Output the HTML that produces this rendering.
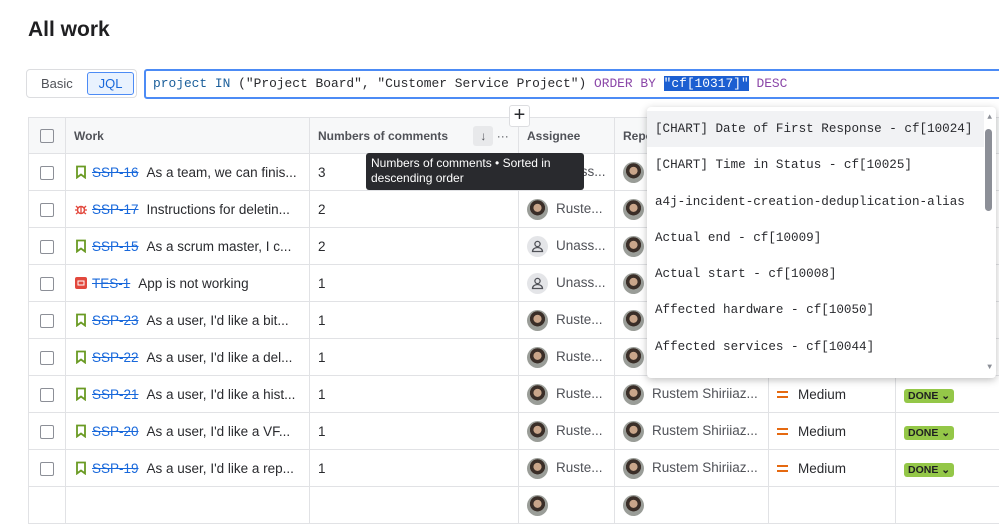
<!DOCTYPE html>
<html><head><style>
*{box-sizing:border-box;margin:0;padding:0}
body{width:999px;height:498px;overflow:hidden;background:#fff;font-family:"Liberation Sans",sans-serif;color:#292a2e;position:relative;font-size:14px}
h1{position:absolute;left:28px;top:18px;font-size:21px;font-weight:bold;color:#1f1f21}
.toggle{position:absolute;left:26px;top:69px;width:111px;height:29px;border:1px solid #dcdde0;border-radius:4px}
.toggle .b{position:absolute;left:14px;top:6px;font-size:13px;color:#505258}
.toggle .j{position:absolute;left:60px;top:2px;width:47px;height:23px;background:#e9f2fe;border:1px solid #4c8bf5;border-radius:3px;color:#1868db;font-size:13px;text-align:center;line-height:21px}
.jql{position:absolute;left:144px;top:69px;width:870px;height:30px;border:2px solid #4c8bf5;border-radius:3px;font-family:"Liberation Mono",monospace;font-size:12.9px;line-height:26px;padding-left:7px;white-space:pre;color:#292a2e}
.k{color:#1a5e9a}.o{color:#8b47a8}.sel{background:#1c5fd1;color:#fff}
table{position:absolute;left:28px;top:117px;border-collapse:collapse;table-layout:fixed;width:1000px}
td,th{border:1px solid #e1e2e5;height:37px;font-size:13.5px;white-space:nowrap;overflow:hidden;padding:0 8px;text-align:left}
th{background:#f7f8f9;font-size:12px;font-weight:bold;color:#505258;height:36px}
.cb{width:14px;height:14px;border:1.5px solid #8c8f97;border-radius:2px;display:inline-block;vertical-align:middle;margin-left:3px}
.key{color:#1868db;text-decoration:line-through;margin:0 8px 0 4px}
.ic{display:inline-block;vertical-align:-2px}
.av{display:inline-block;width:21px;height:21px;border-radius:50%;vertical-align:middle;background:radial-gradient(circle at 50% 42%,#c9a58a 0 24%,#3a2e28 26% 46%,#9a9d98 48%);margin-right:8px}
.ua{display:inline-block;width:21px;height:21px;border-radius:50%;vertical-align:middle;background:#e4e5e8;margin-right:8px;position:relative}
.gray{color:#505258}
.eq{display:inline-block;width:11px;height:7px;border-top:2px solid #e56910;border-bottom:2px solid #e56910;margin-right:10px;vertical-align:middle}
.done{background:#94c748;color:#1f1f21;font-size:10.5px;font-weight:bold;padding:1px 4px;border-radius:3px}
.tip{position:absolute;left:366px;top:153px;width:218px;height:37px;background:#292a2e;color:#fff;font-size:12px;border-radius:3px;padding:3px 5px;line-height:15px}
.plus{position:absolute;left:509px;top:105px;width:21px;height:22px;background:#fff;border:1px solid #dcdde0;border-radius:3px;font-size:20px;line-height:19px;text-align:center;color:#292a2e}
.dd{position:absolute;left:647px;top:107px;width:349px;height:271px;background:#fff;border-radius:4px;box-shadow:0 2px 8px rgba(0,0,0,.25);font-family:"Liberation Mono",monospace;font-size:12.6px;color:#292a2e;overflow:hidden}
.dd div.i{height:36.3px;line-height:36px;padding-left:8px}
.dd .hl{background:#f1f2f4;margin-right:12px}
.sb{position:absolute;right:4px;top:22px;width:7px;height:82px;background:#8c8f97;border-radius:4px}
</style></head><body>
<h1>All work</h1>
<div class="toggle"><span class="b">Basic</span><span class="j">JQL</span></div>
<div class="jql"><span class="k">project</span> <span class="k">IN</span> ("Project Board", "Customer Service Project") <span class="o">ORDER BY</span> <span class="sel">"cf[10317]"</span> <span class="o">DESC</span></div>
<table>
<colgroup><col style="width:37px"><col style="width:244px"><col style="width:209px"><col style="width:96px"><col style="width:154px"><col style="width:127px"><col style="width:133px"></colgroup>
<tr><th><span class="cb"></span></th><th>Work</th><th>Numbers of comments <span style="display:inline-block;width:20px;height:20px;background:#e8e9eb;border-radius:3px;margin-left:22px;text-align:center;line-height:20px;font-weight:normal">↓</span> <span style="font-weight:normal">···</span></th><th>Assignee</th><th>Reporter</th><th>Priority</th><th>Status</th></tr>
<tr><td><span class="cb"></span></td><td><svg class="ic" width="14" height="14"><path d="M3 1.5h8v11l-4-3-4 3z" fill="none" stroke="#6a9a23" stroke-width="1.8"/></svg><span class="key">SSP-16</span>As a team, we can finis...</td><td>3</td><td><span class="ua"></span><span class="gray">Unass...</span></td><td><span class="av"></span></td><td></td><td></td></tr>
<tr><td><span class="cb"></span></td><td><svg class="ic" width="14" height="14"><circle cx="7" cy="8" r="3.5" fill="none" stroke="#e2483d" stroke-width="1.5"/><path d="M1 8h2.5M10.5 8h2.5M2 4l2 2M12 4l-2 2M2 12l2-1.5M12 12l-2-1.5M7 4.5V12" stroke="#e2483d" stroke-width="1.3"/></svg><span class="key">SSP-17</span>Instructions for deletin...</td><td>2</td><td><span class="av"></span><span class="gray">Ruste...</span></td><td><span class="av"></span></td><td></td><td></td></tr>
<tr><td><span class="cb"></span></td><td><svg class="ic" width="14" height="14"><path d="M3 1.5h8v11l-4-3-4 3z" fill="none" stroke="#6a9a23" stroke-width="1.8"/></svg><span class="key">SSP-15</span>As a scrum master, I c...</td><td>2</td><td><span class="ua"><svg width="21" height="21" style="position:absolute;left:0;top:0"><circle cx="10.5" cy="8" r="2.6" fill="none" stroke="#505258" stroke-width="1.3"/><path d="M5.5 15.5a5 4 0 0 1 10 0z" fill="none" stroke="#505258" stroke-width="1.3"/></svg></span><span class="gray">Unass...</span></td><td><span class="av"></span></td><td></td><td></td></tr>
<tr><td><span class="cb"></span></td><td><svg class="ic" width="14" height="14"><rect x="1" y="1" width="12" height="12" rx="2" fill="#e2483d"/><rect x="4" y="5" width="6" height="4" fill="none" stroke="#fff"/></svg><span class="key">TES-1</span>App is not working</td><td>1</td><td><span class="ua"><svg width="21" height="21" style="position:absolute;left:0;top:0"><circle cx="10.5" cy="8" r="2.6" fill="none" stroke="#505258" stroke-width="1.3"/><path d="M5.5 15.5a5 4 0 0 1 10 0z" fill="none" stroke="#505258" stroke-width="1.3"/></svg></span><span class="gray">Unass...</span></td><td><span class="av"></span></td><td></td><td></td></tr>
<tr><td><span class="cb"></span></td><td><svg class="ic" width="14" height="14"><path d="M3 1.5h8v11l-4-3-4 3z" fill="none" stroke="#6a9a23" stroke-width="1.8"/></svg><span class="key">SSP-23</span>As a user, I'd like a bit...</td><td>1</td><td><span class="av"></span><span class="gray">Ruste...</span></td><td><span class="av"></span></td><td></td><td></td></tr>
<tr><td><span class="cb"></span></td><td><svg class="ic" width="14" height="14"><path d="M3 1.5h8v11l-4-3-4 3z" fill="none" stroke="#6a9a23" stroke-width="1.8"/></svg><span class="key">SSP-22</span>As a user, I'd like a del...</td><td>1</td><td><span class="av"></span><span class="gray">Ruste...</span></td><td><span class="av"></span></td><td></td><td></td></tr>
<tr><td><span class="cb"></span></td><td><svg class="ic" width="14" height="14"><path d="M3 1.5h8v11l-4-3-4 3z" fill="none" stroke="#6a9a23" stroke-width="1.8"/></svg><span class="key">SSP-21</span>As a user, I'd like a hist...</td><td>1</td><td><span class="av"></span><span class="gray">Ruste...</span></td><td><span class="av"></span><span class="gray">Rustem Shiriiaz...</span></td><td><span class="eq"></span>Medium</td><td><span class="done">DONE ⌄</span></td></tr>
<tr><td><span class="cb"></span></td><td><svg class="ic" width="14" height="14"><path d="M3 1.5h8v11l-4-3-4 3z" fill="none" stroke="#6a9a23" stroke-width="1.8"/></svg><span class="key">SSP-20</span>As a user, I'd like a VF...</td><td>1</td><td><span class="av"></span><span class="gray">Ruste...</span></td><td><span class="av"></span><span class="gray">Rustem Shiriiaz...</span></td><td><span class="eq"></span>Medium</td><td><span class="done">DONE ⌄</span></td></tr>
<tr><td><span class="cb"></span></td><td><svg class="ic" width="14" height="14"><path d="M3 1.5h8v11l-4-3-4 3z" fill="none" stroke="#6a9a23" stroke-width="1.8"/></svg><span class="key">SSP-19</span>As a user, I'd like a rep...</td><td>1</td><td><span class="av"></span><span class="gray">Ruste...</span></td><td><span class="av"></span><span class="gray">Rustem Shiriiaz...</span></td><td><span class="eq"></span>Medium</td><td><span class="done">DONE ⌄</span></td></tr>
<tr><td></td><td></td><td></td><td><span class="av"></span></td><td><span class="av"></span></td><td></td><td></td></tr>
</table>
<div class="tip">Numbers of comments • Sorted in descending order</div>
<div class="plus">+</div>
<div class="dd">
<div style="height:4px"></div>
<div class="i hl">[CHART] Date of First Response - cf[10024]</div>
<div class="i">[CHART] Time in Status - cf[10025]</div>
<div class="i">a4j-incident-creation-deduplication-alias</div>
<div class="i">Actual end - cf[10009]</div>
<div class="i">Actual start - cf[10008]</div>
<div class="i">Affected hardware - cf[10050]</div>
<div class="i">Affected services - cf[10044]</div>
<div class="sb"></div>
<div style="position:absolute;right:4px;top:6px;color:#8c8f97;font-size:8px">▲</div>
<div style="position:absolute;right:4px;bottom:6px;color:#8c8f97;font-size:8px">▼</div>
</div>
</body></html>
